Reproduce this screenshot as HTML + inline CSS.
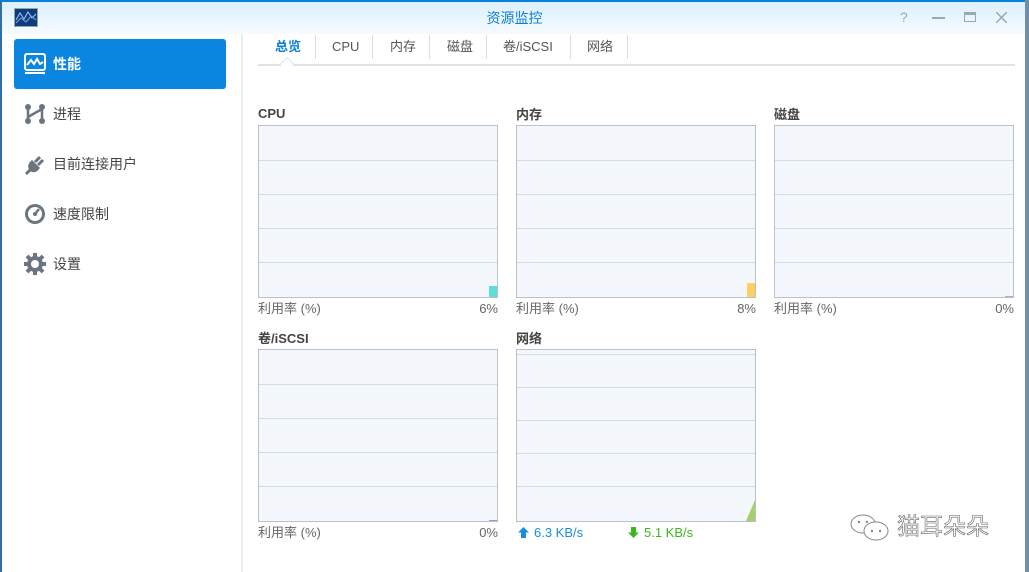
<!DOCTYPE html>
<html><head><meta charset="utf-8"><style>
*{margin:0;padding:0;box-sizing:border-box}
body{width:1029px;height:572px;overflow:hidden;background:#fff;font-family:"Liberation Sans","Noto Sans CJK SC",sans-serif;position:relative;font-size:13px;color:#555}
.abs{position:absolute}
#top{left:0;top:0;width:1029px;height:2px;background:#0a7fd6}
#title{left:0;top:2px;width:1025px;height:32px;background:linear-gradient(#dcefff,#f6fbff)}
#rstrip{left:1025px;top:0;width:4px;height:572px;background:#6f8fa8}
#lstrip{left:0;top:0;width:2px;height:572px;background:#2e6fa8}
.nav{left:14px;width:212px;height:50px;display:flex;align-items:center;padding-left:10px;font-size:14px;color:#444}
.nav svg{margin-right:7px}
.box{position:absolute;width:240px;height:173px;border:1px solid #b8c2cc;background:#f4f8fc}
.box i{position:absolute;left:0;right:0;height:1px;background:#d4dbe2}
.lbl{position:absolute;font-size:13px;font-weight:bold;color:#444;line-height:16px}
.foot{position:absolute;width:240px;height:16px;font-size:13px;line-height:16px;color:#666}
.foot span{position:absolute;top:0;line-height:16px}
.tab{position:absolute;top:39px;font-size:13px;color:#555;line-height:16px}
.sep{position:absolute;top:35px;width:1px;height:24px;background:#d8dee4}
</style></head><body>
<div class="abs" id="title"></div>
<div class="abs" id="top"></div>
<div class="abs" id="lstrip"></div>
<div class="abs" id="rstrip"></div>
<svg class="abs" style="left:14px;top:8px" width="24" height="19"><rect x="0.5" y="0.5" width="23" height="18" fill="#123a7a" stroke="#8aa"/><polyline points="2,12 6,5 10,11 14,4 18,10 22,6" fill="none" stroke="#9cf" stroke-width="1"/><polyline points="2,15 7,10 12,14 17,8 22,12" fill="none" stroke="#6ad" stroke-width="1"/></svg>
<div class="abs" style="left:0;top:9px;width:1029px;text-align:center;font-size:14px;line-height:18px;color:#0a7fd6">资源监控</div>
<div class="abs" style="left:900px;top:9px;font-size:14px;color:#9aa">?</div>
<div class="abs" style="left:932px;top:17px;width:13px;height:2px;background:#9aa"></div>
<div class="abs" style="left:964px;top:12px;width:12px;height:10px;border:1px solid #9aa;border-top:3px solid #9aa"></div>
<svg class="abs" style="left:996px;top:12px" width="11" height="11"><path d="M0 0L11 11M11 0L0 11" stroke="#9aa" stroke-width="1.5"/></svg>
<div class="abs" style="left:241px;top:34px;width:2px;height:538px;background:#eceff2"></div>

<div class="abs nav" style="top:39px;background:#0a86e0;color:#fff;font-weight:bold;border-radius:3px">
<svg width="22" height="22"><rect x="1" y="1" width="20" height="16" rx="2" fill="none" stroke="#fff" stroke-width="2"/><polyline points="3,12 7,7 10,11 13,6 16,11 19,9" fill="none" stroke="#fff" stroke-width="2"/><rect x="1" y="19" width="20" height="2" fill="#fff"/></svg>性能</div>
<div class="abs nav" style="top:89px"><svg width="22" height="22"><circle cx="4" cy="4" r="3" fill="#6b7580"/><circle cx="4" cy="18" r="3" fill="#6b7580"/><circle cx="18" cy="4" r="3" fill="#6b7580"/><circle cx="18" cy="18" r="3" fill="#6b7580"/><path d="M4 4V18M4 14L18 6M18 4V18" stroke="#6b7580" stroke-width="2.5"/></svg>进程</div>
<div class="abs nav" style="top:139px"><svg width="22" height="22"><path d="M2 21L7 16M8 9L14 15Q11 19 7 17Q4 13 8 9ZM11 9L16 4M14 12L19 7" stroke="#6b7580" stroke-width="3" fill="#6b7580"/></svg>目前连接用户</div>
<div class="abs nav" style="top:189px"><svg width="22" height="22"><circle cx="11" cy="11" r="10" fill="#6b7580"/><circle cx="11" cy="11" r="7" fill="#fff"/><path d="M11 11L15 6" stroke="#6b7580" stroke-width="2.5"/><circle cx="11" cy="11" r="2" fill="#6b7580"/></svg>速度限制</div>
<div class="abs nav" style="top:239px"><svg width="22" height="22"><circle cx="11" cy="11" r="8" fill="#6b7580"/><g stroke="#6b7580" stroke-width="4"><path d="M11 0V22M0 11H22M3 3L19 19M19 3L3 19"/></g><circle cx="11" cy="11" r="4" fill="#fff"/></svg>设置</div>

<div class="tab" style="left:275px;color:#0a7fd6;font-weight:bold">总览</div>
<div class="sep" style="left:315px"></div>
<div class="tab" style="left:332px">CPU</div>
<div class="sep" style="left:372px"></div>
<div class="tab" style="left:390px">内存</div>
<div class="sep" style="left:429px"></div>
<div class="tab" style="left:447px">磁盘</div>
<div class="sep" style="left:486px"></div>
<div class="tab" style="left:503px">卷/iSCSI</div>
<div class="sep" style="left:570px"></div>
<div class="tab" style="left:587px">网络</div>
<div class="sep" style="left:627px"></div>
<div class="abs" style="left:258px;top:64px;width:757px;height:2px;background:#dde3e8"></div>
<div class="abs" style="left:282px;top:59px;width:10px;height:10px;background:#fff;border-left:1px solid #dde3e8;border-top:1px solid #dde3e8;transform:rotate(45deg)"></div>

<div class="lbl" style="left:258px;top:106px">CPU</div>
<div class="box" style="left:258px;top:125px"><i style="top:34px"></i><i style="top:68px"></i><i style="top:102px"></i><i style="top:136px"></i><div class="abs" style="right:0;bottom:0;width:8px;height:11px;background:#5ee0d8"></div></div>
<div class="foot" style="left:258px;top:301px"><span style="left:0">利用率 (%)</span><span style="right:0">6%</span></div>

<div class="lbl" style="left:516px;top:107px">内存</div>
<div class="box" style="left:516px;top:125px"><i style="top:34px"></i><i style="top:68px"></i><i style="top:102px"></i><i style="top:136px"></i><div class="abs" style="right:0;bottom:0;width:8px;height:14px;background:#fdd060"></div></div>
<div class="foot" style="left:516px;top:301px"><span style="left:0">利用率 (%)</span><span style="right:0">8%</span></div>

<div class="lbl" style="left:774px;top:107px">磁盘</div>
<div class="box" style="left:774px;top:125px"><i style="top:34px"></i><i style="top:68px"></i><i style="top:102px"></i><i style="top:136px"></i><div class="abs" style="right:0;bottom:0;width:8px;height:1px;background:#d9a"></div></div>
<div class="foot" style="left:774px;top:301px"><span style="left:0">利用率 (%)</span><span style="right:0">0%</span></div>

<div class="lbl" style="left:258px;top:331px">卷/iSCSI</div>
<div class="box" style="left:258px;top:349px"><i style="top:34px"></i><i style="top:68px"></i><i style="top:102px"></i><i style="top:136px"></i><div class="abs" style="right:0;bottom:0;width:8px;height:1px;background:#99b"></div></div>
<div class="foot" style="left:258px;top:525px"><span style="left:0">利用率 (%)</span><span style="right:0">0%</span></div>

<div class="lbl" style="left:516px;top:331px">网络</div>
<div class="box" style="left:516px;top:349px"><i style="top:4px"></i><i style="top:37px"></i><i style="top:70px"></i><i style="top:103px"></i><i style="top:136px"></i>
<svg class="abs" style="right:0;bottom:0" width="9" height="21"><polygon points="0,21 9,0 9,21 " fill="#a6d06a"/></svg></div>
<svg class="abs" style="left:518px;top:527px" width="11" height="11"><path d="M5.5 0L11 5.5H8V11H3V5.5H0Z" fill="#1a8ce0"/></svg>
<div class="abs" style="left:534px;top:525px;font-size:13px;line-height:16px;color:#1a8ce0">6.3 KB/s</div>
<svg class="abs" style="left:628px;top:527px" width="11" height="11"><path d="M5.5 11L11 5.5H8V0H3V5.5H0Z" fill="#3bb820"/></svg>
<div class="abs" style="left:644px;top:525px;font-size:13px;line-height:16px;color:#3bb820">5.1 KB/s</div>

<svg class="abs" style="left:849px;top:513px" width="42" height="30"><ellipse cx="14" cy="11" rx="12" ry="9" fill="#fff" stroke="#888"/><ellipse cx="27" cy="18" rx="12" ry="9" fill="#fff" stroke="#888"/><circle cx="10" cy="9" r="1.2" fill="#888"/><circle cx="18" cy="9" r="1.2" fill="#888"/><circle cx="23" cy="18" r="1.2" fill="#888"/><circle cx="31" cy="18" r="1.2" fill="#888"/></svg>
<div class="abs" style="left:897px;top:512px;font-size:23px;line-height:28px;color:#fff;-webkit-text-stroke:0.6px #666">猫耳朵朵</div>
</body></html>
